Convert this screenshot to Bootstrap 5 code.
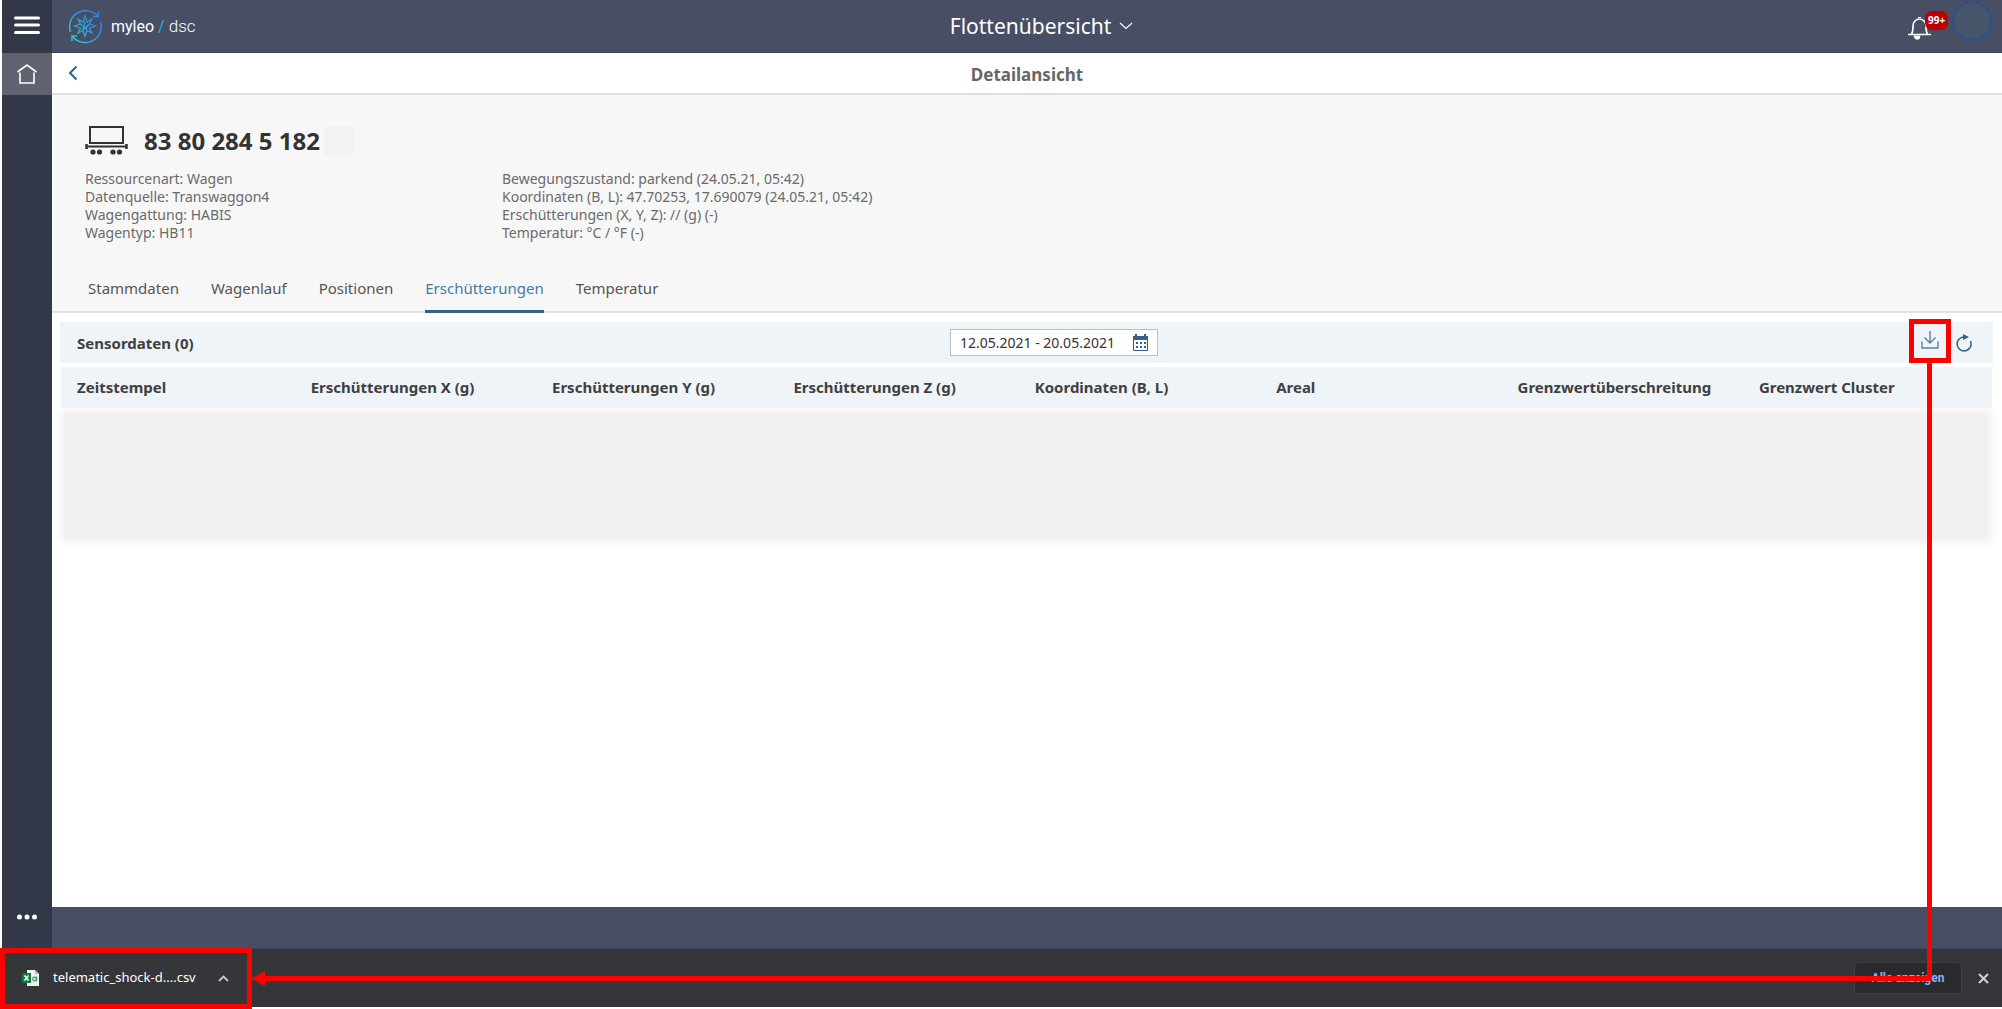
<!DOCTYPE html>
<html lang="de">
<head>
<meta charset="utf-8">
<meta name="viewport" content="width=device-width, initial-scale=1">
<title>myleo / dsc – Flottenübersicht</title>
<link href="https://cdn.jsdelivr.net/npm/bootstrap@5.3.0/dist/css/bootstrap.min.css" rel="stylesheet">
<style>
  body { font-family: "Noto Sans", "Open Sans", sans-serif; font-size: 14px; color: #333; background: #fff; }
  button, a { color: inherit; text-decoration: none; }
  button { background: none; border: 0; padding: 0; }
  svg { display: block; }
  .shell { padding-left: 2px; }
  .rail { width: 50px; background: #323848; color: #fff; }
  .rail button { display: flex; align-items: center; justify-content: center; width: 100%; }
  .rail-menu { height: 53px; padding-bottom: 4px; }
  .rail-home { height: 42px; background: #5f636f; }
  .rail-more { height: 62px; padding-bottom: 2px; }
  .topbar { height: 53px; background: #484e63; color: #fff; padding: 0 10px 0 15px; border-bottom: 1px solid #3b4158; }
  .topbar > * { flex: 1 1 0; }
  .brand-text { font-family: Roboto, sans-serif; font-size: 16px; line-height: 20px; }
  .brand-light { font-weight: 300; font-size: 17px; }
  .brand-slash { color: #2bb3e0; margin: 0 4px; }
  .app-title { font-size: 21px; line-height: 28px; }
  .count { top: -5px; left: 17px; height: 19px; padding: 0 3px; border-radius: 7px; background: #b00; font-size: 10px; font-weight: 700; line-height: 19px; }
  .bell { margin-right: 21px; }
  .avatar { width: 40px; height: 40px; border: 2px solid #2e4f8f; border-radius: 50%; background: #465569; margin-top: -10px; }
  .subbar { height: 42px; border-bottom: 2px solid #e1e1e1; }
  .subbar h1 { font-size: 17px; font-weight: 700; color: #666; margin: 0; }
  .back { left: 16px; top: 0; height: 40px; color: #346187; }
  .detail { background: #f7f7f7; border-bottom: 2px solid #e3e3e3; padding: 28px 33px 0 33px; }
  .detail h2 { font-size: 24px; line-height: 36px; font-weight: 700; margin: 0; }
  .masked { width: 30px; height: 28px; background: #f2f2f2; }
  .facts { color: #6a6a6a; line-height: 18px; margin-top: 11px; }
  .facts > div { width: 417px; }
  .tabs { margin: 20px 0 -2px 3px; gap: 32px; color: #555; font-size: 15px; }
  .tabs a { padding-top: 16px; line-height: 20px; border-bottom: 3px solid transparent; height: 51px; }
  .tabs a.active { color: #427cac; border-color: #346187; }
  .work { padding: 9px 9px 0 8px; }
  .tools { height: 41px; background: #eff4f9; padding: 0 16px 0 17px; color: #346187; }
  .tools > * { flex: 1 1 0; }
  .tools h3 { font-size: 15px; font-weight: 700; margin: 0; color: #404040; }
  .date { flex: 0 0 208px; height: 27px; margin-left: 54px; background: #fff; border: 1px solid #bfbfbf; padding: 0 9px; }
  .date input { border: 0; padding: 0; width: 100%; min-width: 0; color: #333; background: none; outline: 0; }
  .sensor { table-layout: fixed; margin: 4px 0 0; border-collapse: collapse; }
  .grid-wrap { padding: 0 1px; }
  .sensor th { width: 12.5%; height: 41px; padding: 0 16px; background: #eff4f9; font-size: 15px; font-weight: 700; color: #404040; white-space: nowrap; vertical-align: middle; border: 0; }
  .sensor th:first-child { width: 12.1%; }
  .sensor th:last-child { width: auto; }
  .veil { height: 126px; margin: 5px 4px 0; background: #f1f1f1; box-shadow: 0 0 8px 4px #f1f1f1; }
  .foot { height: 42px; background: #484e63; border-bottom: 1px solid #3b4158; }
  .shelf { height: 58px; margin: 0 0 2px 2px; background: #35363a; color: #fff; padding: 0 13px 0 20px; }
  .file { font-size: 13px; margin: 0 22px 0 14px; }
  .show-all { width: 108px; height: 32px; background: #292a2d; border: 1px solid #3f4044; border-radius: 4px; color: #8ab4f8; font: 700 12px/16px Roboto, sans-serif; }
  .mark-get { width: 42px; height: 44px; border: 5px solid red; right: -12px; top: -12px; }
  .mark-file { left: 0; bottom: 0; width: 252px; height: 61px; border: 5px solid red; }
  .wire { left: 264px; right: 70px; top: 362px; bottom: 28px; border: solid red; border-width: 0 5px 5px 0; pointer-events: none; }
  .wire-tip { left: 251px; bottom: 23px; pointer-events: none; }
</style>
<script src="https://cdn.jsdelivr.net/npm/bootstrap@5.3.0/dist/js/bootstrap.bundle.min.js"></script>
</head>
<body>
<div class="d-flex flex-column vh-100 position-relative overflow-hidden">
  <div class="shell d-flex flex-grow-1">
    <nav class="rail d-flex flex-column flex-shrink-0" aria-label="Hauptmenü">
      <button class="rail-menu" aria-label="Menü"><svg width="26" height="20" stroke="#fff" stroke-width="3" stroke-linecap="round"><path d="M1.500 3H24.500M1.500 10H24.500M1.500 17.500H24.500"/></svg></button>
      <button class="rail-home" aria-label="Startseite"><svg width="22" height="22" fill="none" stroke="#fff" stroke-width="1.600"><path d="M1.500 9 11 2l9.500 7M4 9.500V20H18V9.500"/></svg></button>
      <button class="rail-more mt-auto" aria-label="Mehr"><svg width="20" height="6" fill="#fff"><circle cx="2.500" cy="3" r="2.500"/><circle cx="10" cy="3" r="2.500"/><circle cx="17.500" cy="3" r="2.500"/></svg></button>
    </nav>
    <div class="flex-grow-1 d-flex flex-column">
      <header class="topbar d-flex align-items-center">
        <a href="#" class="d-flex align-items-center">
          <svg width="36" height="36" viewBox="0 0 36 36" fill="none" stroke="url(#lg)" stroke-width="1.500">
            <defs><linearGradient id="lg" gradientUnits="userSpaceOnUse" x1="4" y1="30" x2="32" y2="6"><stop offset="0" stop-color="#2bc4d8"/><stop offset="1" stop-color="#2a7df0"/></linearGradient></defs>
            <path d="M3.500 24A16 16 0 0 1 30.500 8M33.500 14A16 16 0 0 1 6 29M31.500 3.500V8.500H26M10 28H5V33"/>
            <path stroke-width="1.200" d="M18 8l2 6 5-3-2.500 5 6 2-6 2 2.500 5-5-2.500-2 6-2-6-5 2.500 2.500-5-6-2 6-2L11 11l5 3zM13.500 16l7 5.500M22.500 16l-7 5.500M18 14l-2 8 6-5"/>
          </svg>
          <span class="brand-text ms-2">myleo<span class="brand-slash">/</span><span class="brand-light">dsc</span></span>
        </a>
        <button class="app-title d-flex align-items-center justify-content-center gap-2 ps-4">Flottenübersicht
          <svg width="14" height="8" fill="none" stroke="#fff" stroke-width="1.200"><path d="M1 1l6 5.500L13 1"/></svg></button>
        <div class="d-flex justify-content-end align-items-center">
          <button class="bell position-relative mt-1" aria-label="Benachrichtigungen">
            <svg width="23" height="24" fill="none" stroke="#fff" stroke-width="1.700"><path d="M0 18.500H23M3.500 18c1.500-2 1.500-4 1.500-8 0-4 3-7 6.500-7S18 6 18 10c0 4 0 6 1.500 8"/><path d="M6 20h6l-1 3H7.500zM10 1.500h3" fill="#fff" stroke-width="1"/></svg>
            <span class="count position-absolute">99+</span>
          </button>
          <div class="avatar"></div>
        </div>
      </header>
      <div class="subbar position-relative d-flex align-items-center justify-content-center pt-1">
        <a href="#" class="back position-absolute d-flex align-items-center" aria-label="Zurück"><svg width="10" height="16" fill="none" stroke="currentColor" stroke-width="2"><path d="M8.500 1.500 2 8l6.500 6.500"/></svg></a>
        <h1>Detailansicht</h1>
      </div>
      <section class="detail">
        <div class="d-flex align-items-center">
          <svg class="me-3" width="43" height="30" fill="none" stroke="#333" stroke-width="2"><rect x="5" y="1" width="33" height="16"/><path d="M2 20.500H41"/><path d="M1.500 18v5M41.500 18v5" stroke-width="2.500"/><g fill="#333" stroke="none"><circle cx="8" cy="26" r="2.600"/><circle cx="14.500" cy="26" r="2.600"/><circle cx="28" cy="26" r="2.600"/><circle cx="34.500" cy="26" r="2.600"/></g></svg>
          <h2>83 80 284 5 182</h2><span class="masked ms-1"></span>
        </div>
        <div class="facts d-flex">
          <div>Ressourcenart: Wagen<br>Datenquelle: Transwaggon4<br>Wagengattung: HABIS<br>Wagentyp: HB11</div>
          <div>Bewegungszustand: parkend (24.05.21, 05:42)<br>Koordinaten (B, L): 47.70253, 17.690079 (24.05.21, 05:42)<br>Erschütterungen (X, Y, Z): // (g) (-)<br>Temperatur: °C / °F (-)</div>
        </div>
        <nav class="tabs d-flex" aria-label="Ansichten">
          <a href="#">Stammdaten</a><a href="#">Wagenlauf</a><a href="#">Positionen</a><a href="#" class="active" aria-current="page">Erschütterungen</a><a href="#">Temperatur</a>
        </nav>
      </section>
      <main class="work flex-grow-1">
        <div class="tools d-flex align-items-center">
          <h3>Sensordaten (0)</h3>
          <div class="date d-flex align-items-center">
            <input type="text" value="12.05.2021 - 20.05.2021" aria-label="Zeitraum">
            <button aria-label="Kalender"><svg width="15" height="17"><path fill="#fff" stroke="#346187" d="M.5 2.500h14v14H.5z"/><path fill="#346187" d="M0 2h15v4H0zM2 0h2v3H2zM11 0h2v3h-2zM3 8h2v2H3zM7 8h2v2H7zM11 8h2v2h-2zM3 12h2v2H3zM7 12h2v2H7zM11 12h2v2h-2z"/></svg></button>
          </div>
          <div class="d-flex justify-content-end align-items-center">
            <div class="position-relative me-3">
              <button aria-label="Herunterladen"><svg width="18" height="18" fill="none" stroke="#5c7f9f" stroke-width="1.400"><path d="M1 10.500V17H17V10.500M9 0V12M3.500 6.500 9 12l5.500-5.500"/></svg></button>
              <span class="mark-get position-absolute"></span>
            </div>
            <button class="me-1" aria-label="Aktualisieren"><svg width="18" height="18" fill="none" stroke="#346187" stroke-width="1.500"><path d="M15.500 7A7 7 0 1 1 8 3"/><path d="M8 0l6 3-6 3z" fill="#346187" stroke="none"/></svg></button>
          </div>
        </div>
        <div class="grid-wrap">
          <table class="table sensor">
            <thead><tr><th>Zeitstempel</th><th>Erschütterungen X (g)</th><th>Erschütterungen Y (g)</th><th>Erschütterungen Z (g)</th><th>Koordinaten (B, L)</th><th>Areal</th><th>Grenzwertüberschreitung</th><th>Grenzwert Cluster</th></tr></thead>
          </table>
          <div class="veil"></div>
        </div>
      </main>
      <footer class="foot"></footer>
    </div>
  </div>
  <div class="shelf d-flex align-items-center flex-shrink-0">
    <svg width="17" height="18"><path d="M5 1h8l4 4v12H5z" fill="#f1f1f1"/><path d="M13 1l4 4h-4z" fill="#bbb"/><path d="M0 4h9v10H0z" fill="#107c41"/><path d="M2.500 6.500l4 5M6.500 6.500l-4 5" stroke="#fff" stroke-width="1.500"/><circle cx="12.500" cy="10" r="1.800" fill="none" stroke="#21a366" stroke-width="1.200"/><path d="M14.700 7.500v5" stroke="#21a366"/></svg>
    <a href="#" class="file">telematic_shock-d....csv</a>
    <button aria-label="Dateioptionen"><svg width="11" height="7" fill="none" stroke="#c8c8c8" stroke-width="1.800"><path d="M1 6l4.500-4.500L10 6"/></svg></button>
    <button class="show-all ms-auto">Alle anzeigen</button>
    <button class="ms-3" aria-label="Schließen"><svg width="11" height="11" stroke="#d0d0d0" stroke-width="2"><path d="M1 1l9 9M10 1l-9 9"/></svg></button>
  </div>
  <span class="wire position-absolute"></span>
  <svg class="wire-tip position-absolute" width="14" height="15" fill="red"><path d="M0 7.500 14 0V15z"/></svg>
  <span class="mark-file position-absolute"></span>
</div>
</body>
</html>
